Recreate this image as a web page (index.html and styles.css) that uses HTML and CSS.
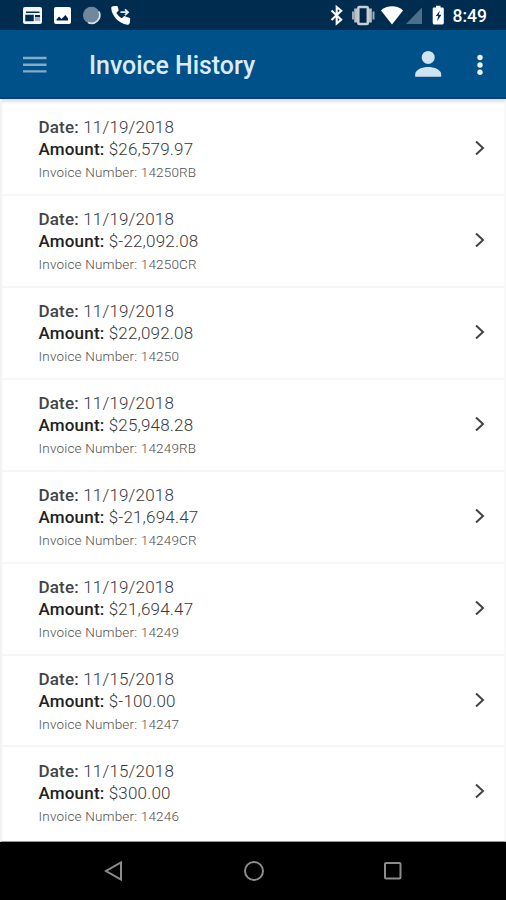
FILE: index.html
```html
<!DOCTYPE html>
<html lang="en">
<head>
<meta charset="utf-8">
<title>Invoice History</title>
<link rel="stylesheet" href="styles.css">
</head>
<body>
<div class="status">
<svg width="112" height="30" viewBox="22 0 112 30">
<rect x="23" y="7" width="19" height="17" rx="2" fill="#f4f7fa"/><path d="M26 12.3h13.500M26 15.500h7v5h-7z" fill="#002c4e" stroke="#002c4e" stroke-width="1.500"/><path d="M35 15h5v6h-5z" fill="#a9b3bf"/><path d="M35 15h5v2h-5z" fill="#002c4e"/>
<rect x="54" y="7" width="17" height="17" rx="2" fill="#fff"/><path d="M56.500 20.500v-1l2.500-3 2.500 2.500 4-4 2.500 3.500v2z" fill="#00213f"/>
<circle cx="91.500" cy="15.300" r="8.500" fill="#71879b"/><path d="M99 11.500A8.300 8.300 0 0 1 88 22.500" fill="none" stroke="#d7e0e8" stroke-width="1.700"/>
<path d="M113 6.300l3.600-.3c.7 0 1 .4 1.200 1l.9 3.600-2.300 2.200c1.400 2.500 3 4.200 5.400 5.500l2.400-2.200 4.900 1.600c.8.300 1.200.8 1.100 1.600l-.4 3.500c-.3 1.400-1.300 2.100-2.700 2-8-.8-15.500-9.300-15.800-16.200-.1-1.500.4-2.200 1.700-2.300z" fill="#fff"/><path d="M120.500 12.200h6.500M125 9.300l3 2.900-3 2.900" fill="none" stroke="#e6edf3" stroke-width="1.800"/>
</svg>
<div class="status-right">
<svg width="116" height="30" viewBox="329 0 116 30">
<path d="M331.500 10.500l9.700 9.300-4.500 3.700V7l4.500 3.800-9.700 9.200" fill="none" stroke="#fff" stroke-width="2.100"/>
<path d="M353 11.500v8M373.500 11.500v8" stroke="#9eabb8" stroke-width="2"/><path d="M355.700 8.500v14M370.300 8.500v14" stroke="#b7c1ca" stroke-width="3"/><rect x="358.300" y="7" width="9.500" height="17" rx="1" fill="#002744" stroke="#c7ced6" stroke-width="2.500"/>
<path d="M381 10.400C386.800 4.800 397.300 4.800 403 10.400L392 24.500z" fill="#fff"/>
<path d="M406 24L422 7.500V24z" fill="#4c6f8c"/>
<path d="M434 7.500h2v-1.700h4.500v1.700h2q1.300 0 1.300 1.300v14q0 1.700-1.300 1.700H434q-1.300 0-1.300-1.700v-14q0-1.300 1.300-1.300z" fill="#fff"/><path d="M440 10.500l-4.200 5.600h2.500l-1.300 5.200 4.500-6.500h-2.800z" fill="#002c4e"/>
</svg>
<span class="clock">8:49</span>
</div>
</div>
<header class="appbar">
<svg class="menu" width="24" height="18" viewBox="0 0 24 18"><path d="M0 2h23.500M0 8.700h23.500M0 15.400h23.500" stroke="#86abc9" stroke-width="2.400"/></svg>
<h1>Invoice History</h1>
<svg class="user" width="28" height="28" viewBox="0 0 28 28"><circle cx="14.200" cy="7.400" r="6.500" fill="#d0e3f1"/><path d="M1.200 26.800v-2.500C1.200 19.500 8.500 17 14.200 17s13 2.500 13 7.300v2.500z" fill="#d0e3f1"/></svg>
<svg class="more" width="8" height="24" viewBox="0 0 8 24"><g fill="#eaf3fa"><circle cx="4" cy="4.500" r="2.700"/><circle cx="4" cy="12" r="2.700"/><circle cx="4" cy="19.300" r="2.700"/></g></svg>
</header>
<main class="list">
<article class="row"><div><p class="date"><b>Date:</b> 11/19/2018</p><p class="amount"><b>Amount:</b> $26,579.97</p><p class="number">Invoice Number: 14250RB</p></div><svg class="chevron" viewBox="0 0 10 16"><path d="M1 1.500L8 8L1 14.500"/></svg></article>
<article class="row"><div><p class="date"><b>Date:</b> 11/19/2018</p><p class="amount"><b>Amount:</b> $-22,092.08</p><p class="number">Invoice Number: 14250CR</p></div><svg class="chevron" viewBox="0 0 10 16"><path d="M1 1.500L8 8L1 14.500"/></svg></article>
<article class="row"><div><p class="date"><b>Date:</b> 11/19/2018</p><p class="amount"><b>Amount:</b> $22,092.08</p><p class="number">Invoice Number: 14250</p></div><svg class="chevron" viewBox="0 0 10 16"><path d="M1 1.500L8 8L1 14.500"/></svg></article>
<article class="row"><div><p class="date"><b>Date:</b> 11/19/2018</p><p class="amount"><b>Amount:</b> $25,948.28</p><p class="number">Invoice Number: 14249RB</p></div><svg class="chevron" viewBox="0 0 10 16"><path d="M1 1.500L8 8L1 14.500"/></svg></article>
<article class="row"><div><p class="date"><b>Date:</b> 11/19/2018</p><p class="amount"><b>Amount:</b> $-21,694.47</p><p class="number">Invoice Number: 14249CR</p></div><svg class="chevron" viewBox="0 0 10 16"><path d="M1 1.500L8 8L1 14.500"/></svg></article>
<article class="row"><div><p class="date"><b>Date:</b> 11/19/2018</p><p class="amount"><b>Amount:</b> $21,694.47</p><p class="number">Invoice Number: 14249</p></div><svg class="chevron" viewBox="0 0 10 16"><path d="M1 1.500L8 8L1 14.500"/></svg></article>
<article class="row"><div><p class="date"><b>Date:</b> 11/15/2018</p><p class="amount"><b>Amount:</b> $-100.00</p><p class="number">Invoice Number: 14247</p></div><svg class="chevron" viewBox="0 0 10 16"><path d="M1 1.500L8 8L1 14.500"/></svg></article>
<article class="row"><div><p class="date"><b>Date:</b> 11/15/2018</p><p class="amount"><b>Amount:</b> $300.00</p><p class="number">Invoice Number: 14246</p></div><svg class="chevron" viewBox="0 0 10 16"><path d="M1 1.500L8 8L1 14.500"/></svg></article>
</main>
<nav class="navbar">
<svg width="20" height="22" viewBox="0 0 20 22"><path d="M17 2.500v17L2 11z"/></svg>
<svg width="22" height="22" viewBox="0 0 22 22"><circle cx="11" cy="11" r="9"/></svg>
<svg width="20" height="22" viewBox="0 0 20 22"><rect x="2" y="3" width="15.500" height="15.500" rx="1"/></svg>
</nav>
</body>
</html>
```
FILE: styles.css
```css
* { box-sizing: border-box; margin: 0; padding: 0; }
body {
  width: 506px;
  height: 900px;
  display: flex;
  flex-direction: column;
  overflow: hidden;
  background: #fff;
  font-family: Roboto, "Liberation Sans", sans-serif;
}
svg { display: block; flex: none; }
.status {
  height: 30px;
  flex: none;
  display: flex;
  justify-content: space-between;
  padding: 0 18px 0 22px;
  background: #002d4f;
}
.status-right { display: flex; gap: 7.500px; }
.clock { width: 35.500px; color: #fff; font-size: 17.500px; font-weight: 500; line-height: 33px; white-space: nowrap; }
.appbar {
  height: 69px;
  flex: none;
  display: flex;
  align-items: center;
  padding: 0 22px 0 23px;
  background: #00508a;
  border-bottom: 2px solid #003f83;
}
.appbar h1 {
  margin-left: 42px;
  color: #dcebfa;
  font-size: 24.900px;
  font-weight: 500;
  line-height: 34px;
  padding-top: 4px;
}
.user { margin-left: auto; }
.more { margin-left: 34.500px; margin-top: 2px; }
.menu { margin-top: 2px; }
.list {
  height: 743px;
  flex: none;
  display: grid;
  grid-template-rows: repeat(8, 91.9px);
  padding-top: 5.2px;
  border-left: 2px solid #f3f3f3;
  border-right: 1px solid #f5f5f5;
  border-bottom: 1px solid #999;
  box-shadow: inset 0 4px 3px -1px #e4e2e4;
}
.row {
  display: flex;
  justify-content: space-between;
  padding: 12.100px 20px 0 36.500px;
  border-bottom: 2px solid #f6f6f6;
}
.row:last-child { border-bottom: 0; }
.date, .amount {
  color: #383838;
  font-size: 17px;
  line-height: 22px;
  letter-spacing: 0.180px;
  font-weight: 300;
  white-space: nowrap;
}
.date b { color: #444; font-weight: 500; }
.amount b { color: #222; font-weight: 500; }
.number {
  margin-top: 2px;
  color: #505050;
  font-size: 13.500px;
  font-weight: 300;
  line-height: 20px;
  letter-spacing: 0.180px;
  white-space: nowrap;
}
.chevron { width: 10px; height: 16px; margin-top: 23.900px; }
.chevron path { fill: none; stroke: #444; stroke-width: 2; }
.navbar {
  height: 58px;
  flex: none;
  display: flex;
  justify-content: center;
  align-items: center;
  gap: 118.500px;
  padding-left: 1px;
  background: #000;
}
.navbar svg { fill: none; stroke: #8c8c8c; stroke-width: 2; }
```
